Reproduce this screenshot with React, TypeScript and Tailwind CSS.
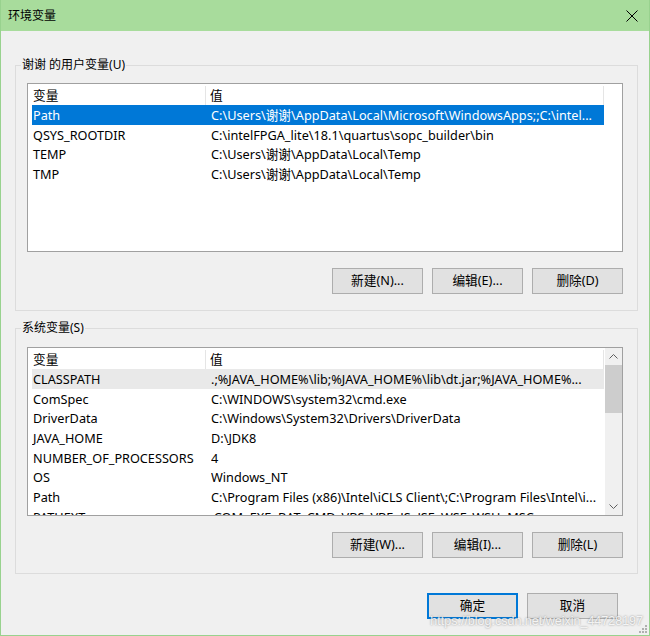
import React from 'react';

interface Variable {
  name: string;
  value: string;
}

const userVars: Variable[] = [
  { name: 'Path', value: 'C:\\Users\\谢谢\\AppData\\Local\\Microsoft\\WindowsApps;;C:\\intel...' },
  { name: 'QSYS_ROOTDIR', value: 'C:\\intelFPGA_lite\\18.1\\quartus\\sopc_builder\\bin' },
  { name: 'TEMP', value: 'C:\\Users\\谢谢\\AppData\\Local\\Temp' },
  { name: 'TMP', value: 'C:\\Users\\谢谢\\AppData\\Local\\Temp' },
];

const systemVars: Variable[] = [
  { name: 'CLASSPATH', value: '.;%JAVA_HOME%\\lib;%JAVA_HOME%\\lib\\dt.jar;%JAVA_HOME%...' },
  { name: 'ComSpec', value: 'C:\\WINDOWS\\system32\\cmd.exe' },
  { name: 'DriverData', value: 'C:\\Windows\\System32\\Drivers\\DriverData' },
  { name: 'JAVA_HOME', value: 'D:\\JDK8' },
  { name: 'NUMBER_OF_PROCESSORS', value: '4' },
  { name: 'OS', value: 'Windows_NT' },
  { name: 'Path', value: 'C:\\Program Files (x86)\\Intel\\iCLS Client\\;C:\\Program Files\\Intel\\i...' },
  { name: 'PATHEXT', value: '.COM;.EXE;.BAT;.CMD;.VBS;.VBE;.JS;.JSE;.WSF;.WSH;.MSC' },
];

function Chevron({ up }: { up?: boolean }) {
  return (
    <svg width="9" height="5" viewBox="0 0 9 5">
      <polyline
        points={up ? '0.5,4.5 4.5,0.5 8.5,4.5' : '0.5,0.5 4.5,4.5 8.5,0.5'}
        fill="none"
        stroke="#606060"
        strokeWidth={1}
      />
    </svg>
  );
}

function WinButton({ label, primary }: { label: string; primary?: boolean }) {
  return (
    <button
      className={`w-[91px] h-[26px] bg-[#e1e1e1] flex items-center justify-center ${
        primary ? 'border-2 border-[#0078d7]' : 'border border-[#adadad]'
      }`}
    >
      {label}
    </button>
  );
}

function VarList({
  vars,
  selected,
  selectedActive,
  scroll,
}: {
  vars: Variable[];
  selected: number;
  selectedActive: boolean;
  scroll?: boolean;
}) {
  return (
    <div className="w-[596px] h-[169px] border border-[#a0a0a0] bg-white flex overflow-hidden">
      <div className="flex-1 flex flex-col overflow-hidden">
        {/* column headers */}
        <div className="flex h-[21px] shrink-0 pt-[2px]">
          <div className="w-[178px] pl-[5px] border-r border-[#e5e5e5] flex items-center">变量</div>
          <div className="w-[398px] pl-[4px] border-r border-[#e5e5e5] flex items-center">值</div>
        </div>
        {vars.map((v, i) => {
          const isSel = i === selected;
          const rowColor = isSel ? (selectedActive ? 'bg-[#0078d7] text-white' : 'bg-[#e9e9e9]') : '';
          return (
            <div key={v.name + i} className={`ml-[4px] w-[572px] h-[19.7px] shrink-0 pt-[1px] flex items-center ${rowColor}`}>
              <div className="w-[179px] pl-[1px] whitespace-nowrap overflow-hidden">{v.name}</div>
              <div className="flex-1 whitespace-nowrap overflow-hidden">{v.value}</div>
            </div>
          );
        })}
      </div>
      {scroll && (
        <div className="w-[17px] bg-[#f0f0f0] flex flex-col shrink-0">
          <div className="h-[17px] flex items-center justify-center">
            <Chevron up />
          </div>
          <div className="flex-1">
            <div className="h-[48px] bg-[#cdcdcd]" />
          </div>
          <div className="h-[17px] flex items-center justify-center">
            <Chevron />
          </div>
        </div>
      )}
    </div>
  );
}

function GroupBox({ label, children, className }: { label: string; children: React.ReactNode; className: string }) {
  return (
    <div className={`relative w-[623px] border border-[#dcdcdc] pl-[11px] ${className}`}>
      <span className="absolute left-[5px] top-[-9px] px-[1px] bg-[#f0f0f0] leading-[16px] text-[12px]">{label}</span>
      {children}
    </div>
  );
}

export default function App() {
  return (
    <div className="relative w-[650px] h-[636px] bg-[#f0f0f0] border-x border-b border-[#98d28e] flex flex-col text-[12.7px] text-black font-['Noto_Sans','Noto_Sans_CJK_SC',sans-serif]">
      {/* title bar */}
      <div className="h-[31px] bg-[#a8dc9c] flex items-center justify-between pl-[7px] pr-[11px] shrink-0">
        <span className="leading-none text-[12px] pt-[1px]">环境变量</span>
        <svg width="12" height="12" viewBox="0 0 12 12">
          <path d="M0.5 0.5 L11.5 11.5 M11.5 0.5 L0.5 11.5" stroke="#000" strokeWidth={1} />
        </svg>
      </div>

      <div className="flex flex-col pl-[14px]">
        <GroupBox label="谢谢 的用户变量(U)" className="mt-[34px] pt-[17px] pb-[16px]">
          <VarList vars={userVars} selected={0} selectedActive />
          <div className="w-[596px] mt-[16px] flex justify-end gap-[9px]">
            <WinButton label="新建(N)..." />
            <WinButton label="编辑(E)..." />
            <WinButton label="删除(D)" />
          </div>
        </GroupBox>

        <GroupBox label="系统变量(S)" className="mt-[17px] pt-[18px] pb-[15px]">
          <VarList vars={systemVars} selected={0} selectedActive={false} scroll />
          <div className="w-[596px] mt-[16px] flex justify-end gap-[9px]">
            <WinButton label="新建(W)..." />
            <WinButton label="编辑(I)..." />
            <WinButton label="删除(L)" />
          </div>
        </GroupBox>

        <div className="w-[623px] mt-[19px] pr-[20px] flex justify-end gap-[9px]">
          <WinButton label="确定" primary />
          <WinButton label="取消" />
        </div>
      </div>

      {/* watermark */}
      <span className="absolute right-[6px] bottom-[8px] text-[12.5px] leading-none text-white/85 [text-shadow:0_0_2px_rgba(80,80,80,0.7)] font-['Liberation_Sans',sans-serif]">
        https://blog.csdn.net/weixin_44728197
      </span>

      {/* resize grip */}
      <svg className="absolute right-[2px] bottom-[2px]" width="9" height="9" viewBox="0 0 9 9">
        <rect x="7" y="1" width="2" height="2" fill="#b0b0b0" />
        <rect x="4" y="4" width="2" height="2" fill="#b0b0b0" />
        <rect x="7" y="4" width="2" height="2" fill="#b0b0b0" />
        <rect x="1" y="7" width="2" height="2" fill="#b0b0b0" />
        <rect x="4" y="7" width="2" height="2" fill="#b0b0b0" />
        <rect x="7" y="7" width="2" height="2" fill="#b0b0b0" />
      </svg>
    </div>
  );
}
